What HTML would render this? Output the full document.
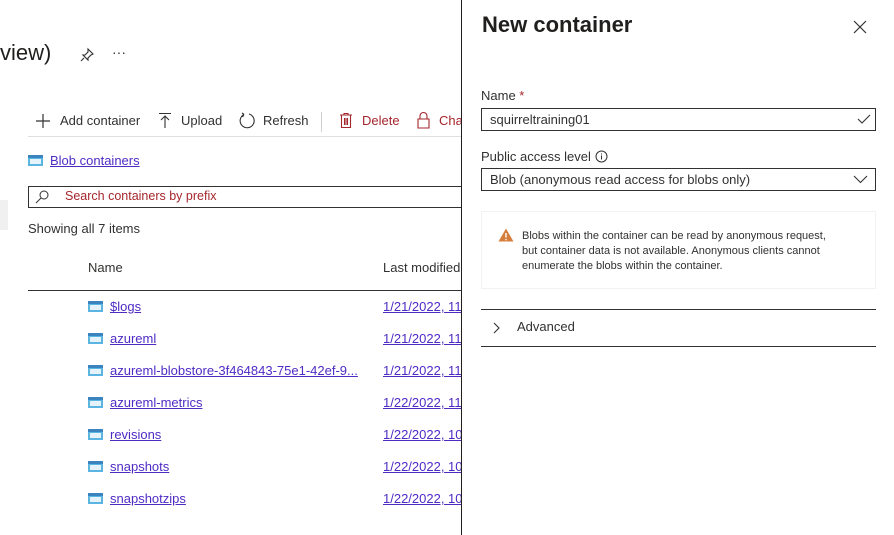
<!DOCTYPE html>
<html><head><style>
body{margin:0;width:894px;height:535px;overflow:hidden;background:#fff;font-family:"Segoe UI","Liberation Sans",sans-serif;color:#323130;position:relative;font-size:13px}
.a{position:absolute;white-space:nowrap}
a{color:#4f2bc4;text-decoration:underline}
.ic{position:absolute;width:15px;height:11px;background:#5ab6e0;border-top:3px solid #3a84c0;box-sizing:border-box}
.ic::after{content:"";position:absolute;left:2px;right:2px;top:1px;bottom:2px;background:#e6f3fa}
.red{color:#a4262c}
</style></head><body>
<div class="a" style="left:0;top:40px;font-size:22px;color:#201f1e">view)</div>
<svg class="a" style="left:79px;top:47px" width="16" height="16" viewBox="0 0 16 16" fill="none" stroke="#323130" stroke-width="1.1"><path d="M9 2l5 5-2 1-3 3 0 2-5-5 2 0 3-3z M5 11l-3 3"/></svg>
<div class="a" style="left:112px;top:44px;font-size:14px">···</div>

<svg class="a" style="left:35px;top:113px" width="16" height="16" fill="none" stroke="#323130" stroke-width="1.2"><path d="M8 1v14M1 8h14"/></svg>
<div class="a" style="left:60px;top:113px">Add container</div>
<svg class="a" style="left:157px;top:112px" width="16" height="17" fill="none" stroke="#323130" stroke-width="1.1"><path d="M2 1.5h12M8 4v12M4 8l4-4 4 4"/></svg>
<div class="a" style="left:181px;top:113px">Upload</div>
<svg class="a" style="left:238px;top:112px" width="18" height="18" fill="none" stroke="#323130" stroke-width="1.1"><path d="M6 2.5A7 7 0 1 0 11 2M6 2.5L4 1M6 2.5L4.5 5"/></svg>
<div class="a" style="left:263px;top:113px">Refresh</div>
<div class="a" style="left:321px;top:112px;width:1px;height:20px;background:#d0d0d0"></div>
<svg class="a" style="left:338px;top:112px" width="16" height="17" fill="none" stroke="#a4262c" stroke-width="1.1"><path d="M2 3h12M6 3V1.5h4V3M3.5 3v12.5h9V3M6.5 6v7M8 6v7M9.5 6v7"/></svg>
<div class="a red" style="left:362px;top:113px">Delete</div>
<svg class="a" style="left:416px;top:111px" width="15" height="18" fill="none" stroke="#a4262c" stroke-width="1.1"><path d="M4 8V5a3.5 3.5 0 0 1 7 0v3M2 8h11v9H2z"/></svg>
<div class="a red" style="left:439px;top:113px">Cha</div>
<div class="a" style="left:28px;top:136px;width:433px;height:1px;background:#e1dfdd"></div>

<div class="ic" style="left:28px;top:155px"></div>
<div class="a" style="left:50px;top:153px"><a>Blob containers</a></div>
<div class="a" style="left:28px;top:186px;width:440px;height:22px;border:1px solid #323130;box-sizing:border-box"></div>
<svg class="a" style="left:35px;top:190px" width="14" height="14" fill="none" stroke="#323130" stroke-width="1"><circle cx="9" cy="5" r="4"/><path d="M6 8l-5 5"/></svg>
<div class="a red" style="left:65px;top:189px;font-size:12.5px">Search containers by prefix</div>
<div class="a" style="left:0;top:200px;width:8px;height:30px;background:#f0f0f0"></div>
<div class="a" style="left:28px;top:221px">Showing all 7 items</div>
<div class="a" style="left:88px;top:260px">Name</div>
<div class="a" style="left:383px;top:260px">Last modified</div>
<div class="a" style="left:28px;top:290px;width:433px;height:1px;background:#323130"></div>

<div class="ic" style="left:88px;top:301px"></div><div class="a" style="left:110px;top:299px"><a>$logs</a></div><div class="a" style="left:383px;top:299px"><a>1/21/2022, 11</a></div>
<div class="ic" style="left:88px;top:333px"></div><div class="a" style="left:110px;top:331px"><a>azureml</a></div><div class="a" style="left:383px;top:331px"><a>1/21/2022, 11</a></div>
<div class="ic" style="left:88px;top:365px"></div><div class="a" style="left:110px;top:363px"><a>azureml-blobstore-3f464843-75e1-42ef-9...</a></div><div class="a" style="left:383px;top:363px"><a>1/21/2022, 11</a></div>
<div class="ic" style="left:88px;top:397px"></div><div class="a" style="left:110px;top:395px"><a>azureml-metrics</a></div><div class="a" style="left:383px;top:395px"><a>1/22/2022, 11</a></div>
<div class="ic" style="left:88px;top:429px"></div><div class="a" style="left:110px;top:427px"><a>revisions</a></div><div class="a" style="left:383px;top:427px"><a>1/22/2022, 10</a></div>
<div class="ic" style="left:88px;top:461px"></div><div class="a" style="left:110px;top:459px"><a>snapshots</a></div><div class="a" style="left:383px;top:459px"><a>1/22/2022, 10</a></div>
<div class="ic" style="left:88px;top:493px"></div><div class="a" style="left:110px;top:491px"><a>snapshotzips</a></div><div class="a" style="left:383px;top:491px"><a>1/22/2022, 10</a></div>

<div class="a" style="left:461px;top:0;width:433px;height:535px;background:#fff;border-left:1px solid #201f1e"></div>
<div class="a" style="left:482px;top:12px;font-size:22px;font-weight:600;color:#201f1e">New container</div>
<svg class="a" style="left:853px;top:20px" width="14" height="14" stroke="#323130" stroke-width="1.2"><path d="M1 1l12 12M13 1L1 13"/></svg>
<div class="a" style="left:481px;top:88px">Name <span style="color:#a4262c">*</span></div>
<div class="a" style="left:481px;top:108px;width:395px;height:23px;border:1px solid #323130;box-sizing:border-box"></div>
<div class="a" style="left:490px;top:112px">squirreltraining01</div>
<svg class="a" style="left:857px;top:113px" width="14" height="12" fill="none" stroke="#323130" stroke-width="1.1"><path d="M1 6l4 4 8-8"/></svg>
<div class="a" style="left:481px;top:149px">Public access level</div>
<svg class="a" style="left:595px;top:150px" width="13" height="13" fill="none" stroke="#323130"><circle cx="6.5" cy="6.5" r="5.5"/><path d="M6.5 5.5v4M6.5 3.5v1"/></svg>
<div class="a" style="left:481px;top:168px;width:395px;height:23px;border:1px solid #323130;box-sizing:border-box"></div>
<div class="a" style="left:490px;top:172px">Blob (anonymous read access for blobs only)</div>
<svg class="a" style="left:853px;top:175px" width="15" height="9" fill="none" stroke="#323130" stroke-width="1.1"><path d="M1 1l6.5 6.5L14 1"/></svg>
<div class="a" style="left:481px;top:211px;width:395px;height:78px;border:1px solid #f3f2f1;box-sizing:border-box"></div>
<svg class="a" style="left:498px;top:228px" width="16" height="14"><path d="M8 0.5L15.5 13.5H0.5z" fill="#d67f3c"/><path d="M8 5v4.5M8 11v1.2" stroke="#fff" stroke-width="1.4"/></svg>
<div class="a" style="left:522px;top:229px;font-size:11px;line-height:15px;color:#323130">Blobs within the container can be read by anonymous request,<br>but container data is not available. Anonymous clients cannot<br>enumerate the blobs within the container.</div>
<div class="a" style="left:481px;top:309px;width:395px;height:1px;background:#323130"></div>
<svg class="a" style="left:493px;top:322px" width="9" height="12" fill="none" stroke="#323130" stroke-width="1.1"><path d="M1 1l5 5-5 5"/></svg>
<div class="a" style="left:517px;top:319px">Advanced</div>
<div class="a" style="left:481px;top:346px;width:395px;height:1px;background:#323130"></div>
</body></html>
